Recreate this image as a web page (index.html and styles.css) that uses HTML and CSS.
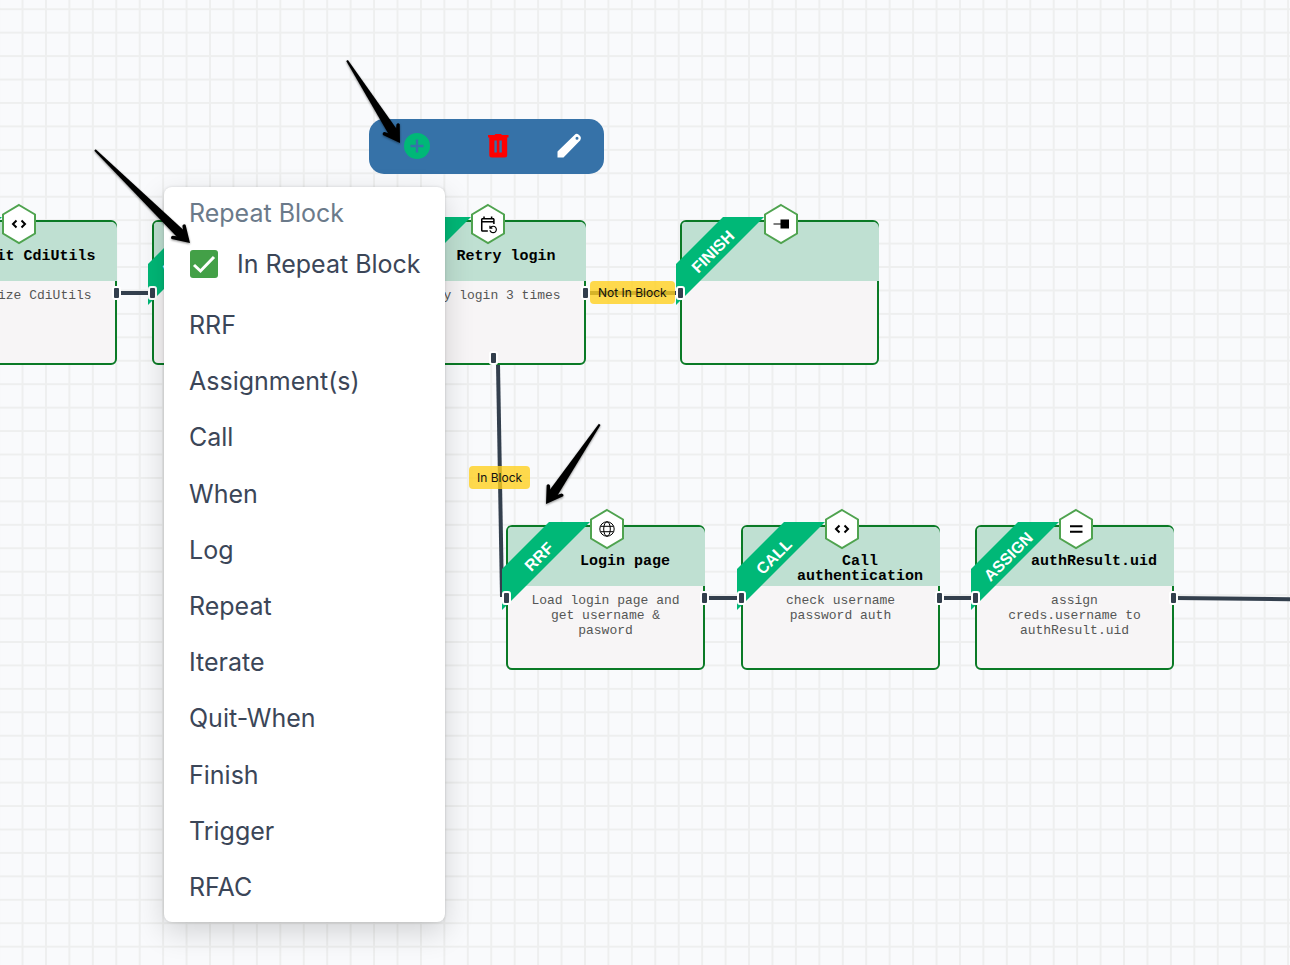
FILE: index.html
```html
<!DOCTYPE html>
<html lang="en">
<head>
<meta charset="utf-8">
<meta name="viewport" content="width=device-width, initial-scale=1">
<title>Flow editor</title>
<link rel="stylesheet" href="styles.css">
</head>
<body>
<main class="canvas">
  <svg class="layer" aria-hidden="true">
    <defs>
      <pattern id="grid" width="20" height="20" patternUnits="userSpaceOnUse" patternTransform="translate(10.8 -2.5) scale(1.1718)">
        <path d="M10 0V20M0 10H20" stroke="#eeefef" stroke-width="1.600" fill="none"/>
      </pattern>
    </defs>
    <rect width="100%" height="100%" fill="url(#grid)"/>
    <g class="edges">
      <path d="M118 293H153"/>
      <path d="M586 293H680"/>
      <path d="M498 364L502 597"/>
      <path d="M706 598H741"/>
      <path d="M940 598H975"/>
      <path d="M1175 598L2400 610"/>
    </g>
  </svg>

  <article class="node" style="left:-82px;top:220px">
    <header class="node-head"><h2>Init CdiUtils</h2></header>
    <p class="node-text">Initialize CdiUtils</p>
    <div class="ribbon"><span>CALL</span></div>
    <svg class="hex" viewBox="0 0 36 42"><path class="hex-shape" d="M18 2L34 11.500V30.500L18 40L2 30.500V11.500Z"/><path class="line" d="M15.500 17.500L12 21L15.500 24.500M20.500 17.500L24 21L20.500 24.500"/></svg>
    <i class="port port-right"></i>
  </article>

  <article class="node" style="left:152px;top:220px">
    <header class="node-head"></header>
    <div class="ribbon"><span>ASSIGN</span></div>
    <i class="port port-left"></i>
  </article>

  <article class="node" style="left:387px;top:220px">
    <header class="node-head"><h2>Retry login</h2></header>
    <p class="node-text">Retry login 3 times</p>
    <div class="ribbon"></div>
    <svg class="hex" viewBox="0 0 36 42"><path class="hex-shape" d="M18 2L34 11.500V30.500L18 40L2 30.500V11.500Z"/><path transform="translate(8.700 12) scale(.76)" d="M21 12V6c0-1.100-.9-2-2-2h-1V2h-2v2H8V2H6v2H5c-1.100 0-1.990.9-1.990 2L3 20c0 1.100.89 2 2 2h7v-2H5V10h14v2h2zm-5.360 8c.43 1.450 1.770 2.500 3.360 2.500 1.930 0 3.500-1.570 3.500-3.500s-1.570-3.500-3.500-3.500c-.95 0-1.820.38-2.450 1H18V18h-4v-4h1.500v1.430c.9-.88 2.140-1.430 3.500-1.430 2.760 0 5 2.240 5 5s-2.240 5-5 5c-2.420 0-4.440-1.720-4.900-4h1.540zM19 8H5V6h14v2z"/></svg>
    <i class="port port-right"></i>
    <i class="port port-bottom"></i>
  </article>

  <article class="node" style="left:680px;top:220px">
    <header class="node-head"></header>
    <div class="ribbon"><span>FINISH</span></div>
    <svg class="hex" viewBox="0 0 36 42"><path class="hex-shape" d="M18 2L34 11.500V30.500L18 40L2 30.500V11.500Z"/><path d="M10.500 20.500H17.500V16.500H26V25.500H17.500V21.500H10.500Z"/></svg>
    <i class="port port-left"></i>
  </article>

  <article class="node" style="left:506px;top:525px">
    <header class="node-head"><h2>Login page</h2></header>
    <p class="node-text">Load login page and get username &amp; pasword</p>
    <div class="ribbon"><span>RRF</span></div>
    <svg class="hex" viewBox="0 0 36 42"><path class="hex-shape" d="M18 2L34 11.500V30.500L18 40L2 30.500V11.500Z"/><g class="line thin"><circle cx="18" cy="21" r="7.200"/><ellipse cx="18" cy="21" rx="3.300" ry="7.200"/><path d="M11.500 18.300H24.500M11.500 23.700H24.500"/></g></svg>
    <i class="port port-left"></i>
    <i class="port port-right"></i>
  </article>

  <article class="node" style="left:741px;top:525px">
    <header class="node-head"><h2>Call authentication</h2></header>
    <p class="node-text">check username password auth</p>
    <div class="ribbon"><span>CALL</span></div>
    <svg class="hex" viewBox="0 0 36 42"><path class="hex-shape" d="M18 2L34 11.500V30.500L18 40L2 30.500V11.500Z"/><path class="line" d="M15.500 17.500L12 21L15.500 24.500M20.500 17.500L24 21L20.500 24.500"/></svg>
    <i class="port port-left"></i>
    <i class="port port-right"></i>
  </article>

  <article class="node" style="left:975px;top:525px">
    <header class="node-head"><h2>authResult.uid</h2></header>
    <p class="node-text">assign creds.username to authResult.uid</p>
    <div class="ribbon"><span>ASSIGN</span></div>
    <svg class="hex" viewBox="0 0 36 42"><path class="hex-shape" d="M18 2L34 11.500V30.500L18 40L2 30.500V11.500Z"/><path class="line thick" d="M12 18.200H24.500M12 23.800H24.500"/></svg>
    <i class="port port-left"></i>
    <i class="port port-right"></i>
  </article>

  <span class="edge-label" style="left:590px;top:281px">Not In Block</span>
  <span class="edge-label" style="left:469px;top:466px">In Block</span>

  <div class="toolbar" role="toolbar" aria-label="Node actions">
    <button type="button" aria-label="Add"><svg viewBox="0 0 26 26"><circle cx="13" cy="13" r="13" fill="#00b877"/><path d="M13 6.500V19.500M6.500 13H19.500" stroke="#3672a8" stroke-width="2.400"/></svg></button>
    <button class="delete" type="button" aria-label="Delete"><svg viewBox="0 0 26 26"><path fill="#f00" fill-rule="evenodd" d="M3 2H9.500L10.500 1H16L17 2H23.500V4.500H22.200V22Q22.200 24.500 19.700 24.500H6.800Q4.300 24.500 4.300 22V4.500H3ZM9.400 7.500V19.500H11.800V7.500ZM14.400 7.500V19.500H16.800V7.500Z"/></svg></button>
    <button type="button" aria-label="Edit"><svg viewBox="0 0 26 26"><path fill="#fff" fill-rule="evenodd" d="M1.500 24.500V18.500L18.500 2Q20.500 0 22.500 1.500L24.300 3.300Q25.800 5.300 24.300 7.300L7.500 24.500ZM21 3.800A1.500 1.500 0 1 0 21 6.800A1.500 1.500 0 1 0 21 3.800Z"/></svg></button>
  </div>

  <section class="menu" aria-label="Repeat Block">
    <h1 class="menu-title">Repeat Block</h1>
    <label class="menu-check">
      <span class="tick"><input type="checkbox" checked><svg viewBox="0 0 28 28" aria-hidden="true"><path d="M4 15L10.500 21L24 7" fill="none" stroke="#fff" stroke-width="3"/></svg></span>
      In Repeat Block
    </label>
    <button type="button">RRF</button>
    <button type="button">Assignment(s)</button>
    <button type="button">Call</button>
    <button type="button">When</button>
    <button type="button">Log</button>
    <button type="button">Repeat</button>
    <button type="button">Iterate</button>
    <button type="button">Quit-When</button>
    <button type="button">Finish</button>
    <button type="button">Trigger</button>
    <button type="button">RFAC</button>
  </section>

  <svg class="layer arrows" aria-hidden="true">
    <defs>
      <path id="head" d="M0 0L-16 -10Q-18.500 -9.500 -17.500 -7L-11 -2V2L-17.500 7Q-18.500 9.500 -16 10Z"/>
    </defs>
    <g transform="translate(400 143) rotate(57.300)"><use href="#head"/><path d="M-98 -1L-9 -5V5L-98 1Z"/></g>
    <g transform="translate(190 243) rotate(44.400)"><use href="#head"/><path d="M-133 -1L-9 -5V5L-133 1Z"/></g>
    <g transform="translate(546 504) rotate(124)"><use href="#head"/><path d="M-96 -1L-9 -5V5L-96 1Z"/></g>
  </svg>
</main>
</body>
</html>
```
FILE: styles.css
```css
* { box-sizing: border-box; }

body {
  margin: 0;
  font-family: Inter, "Liberation Sans", sans-serif;
  color: #3b4658;
}

button {
  border: 0;
  background: none;
  font: inherit;
  color: inherit;
  cursor: pointer;
}

.canvas {
  position: relative;
  min-height: 100vh;
  overflow: hidden;
  background: #f9fafc;
}

.layer {
  position: absolute;
  inset: 0;
  width: 100%;
  height: 100%;
}

.edges {
  fill: none;
  stroke: #333f4d;
  stroke-width: 4;
}

/* Flow nodes */
.node {
  position: absolute;
  width: 199px;
  height: 145px;
  border: 2px solid #0a7a26;
  border-radius: 6px;
  background: #f7f5f6;
  font-family: "Liberation Mono", monospace;
  text-align: center;
}

.node-head {
  height: 59px;
  margin-right: -2px;
  padding: 27px 0 0 37px;
  border-radius: 4px 6px 0 0;
  background: #bfe0d2;
}

.node-head h2 {
  margin: 0;
  padding: 0 16px;
  font-size: 15px;
  line-height: 15px;
  color: #000;
}

.node-text {
  margin: 0;
  padding: 7px 20px 0;
  font-size: 13px;
  line-height: 15px;
  color: #555;
}

.ribbon {
  position: absolute;
  left: -6px;
  top: -5px;
  display: grid;
  place-items: center;
  width: 88px;
  height: 88px;
  padding: 0 13px 19px 0;
  background: #00b877;
  clip-path: polygon(47px 0, 100% 0, 0 100%, 0 47px);
}

.ribbon span {
  transform: rotate(-45deg);
  font: bold 16px/18px "Liberation Sans", sans-serif;
  color: #fff;
}

.hex {
  position: absolute;
  left: 81px;
  top: -19px;
  width: 36px;
  height: 42px;
}

.hex-shape {
  fill: #fff;
  stroke: #4fa34f;
  stroke-width: 2;
}

.line {
  fill: none;
  stroke: #000;
  stroke-width: 2;
}

.thin { stroke-width: 1; }

.thick { stroke-width: 2; }

.port {
  position: absolute;
  top: 64px;
  width: 9px;
  height: 14px;
  border: 2px solid #fff;
  border-radius: 3px;
  background: #333f4d;
}

.port-left { left: -6px; }

.port-right { right: -6px; }

.port-bottom {
  top: auto;
  bottom: -2px;
  left: 100px;
}

.edge-label {
  position: absolute;
  padding: 4px 8px;
  border-radius: 4px;
  background: rgba(255, 209, 31, .8);
  font-size: 12px;
  line-height: 15px;
  white-space: nowrap;
  color: #111;
}

/* Node actions */
.toolbar {
  position: absolute;
  left: 369px;
  top: 119px;
  display: flex;
  justify-content: space-between;
  padding: 14px 22px 15px 35px;
  width: 235px;
  border-radius: 15px;
  background: #3672a8;
}

.toolbar button {
  padding: 0;
  height: 26px;
}

.toolbar .delete { margin-left: 10px; }

.toolbar svg {
  display: block;
  width: 26px;
  height: 26px;
}

/* Block menu */
.menu {
  position: absolute;
  left: 164px;
  top: 187px;
  display: flex;
  flex-direction: column;
  min-height: 735px;
  padding: 8px 24px 7px 25px;
  border-radius: 8px;
  background: #fff;
  box-shadow: 0 0 3px rgba(0, 0, 0, .15), 0 10px 30px rgba(0, 0, 0, .16);
  font-size: 25px;
  line-height: 36px;
}

.menu-title {
  margin: 0;
  font-size: 25px;
  font-weight: 400;
  color: #6b7a8a;
}

.menu-check {
  display: flex;
  align-items: center;
  gap: 19px;
  height: 66px;
  white-space: nowrap;
}

.tick {
  display: grid;
  width: 29px;
  height: 28px;
}

.tick > * { grid-area: 1 / 1; }

.tick input {
  appearance: none;
  width: 28px;
  height: 28px;
  margin: 0 0 0 1px;
  border-radius: 3px;
  background: #43a047;
}

.tick svg {
  width: 28px;
  height: 28px;
  margin-left: 1px;
  pointer-events: none;
}

.menu button {
  flex: 1;
  padding: 0;
  text-align: left;
}

.arrows {
  pointer-events: none;
  filter: drop-shadow(0 1px 1px rgba(0, 0, 0, .45));
}
```
